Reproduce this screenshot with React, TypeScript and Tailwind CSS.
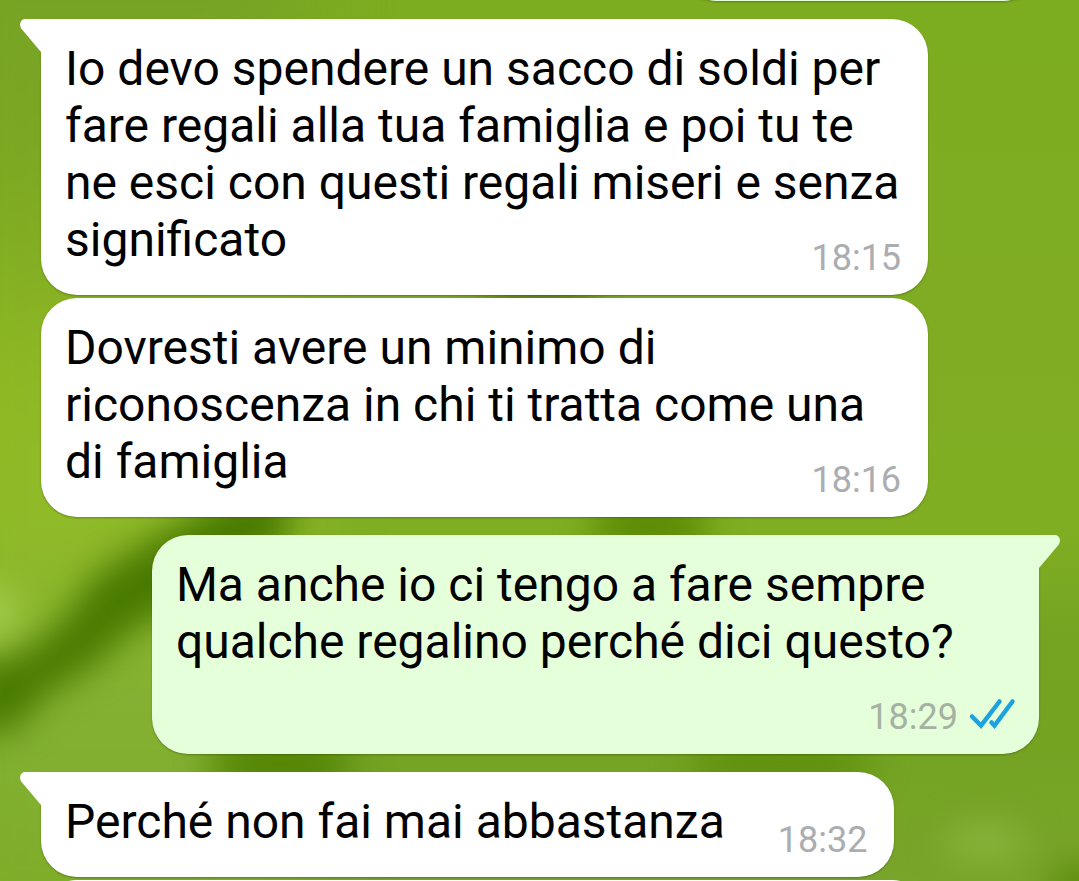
import type { ReactNode } from "react";

type Message = {
  id: number;
  text: string;
  time: string;
  outgoing?: boolean;
  first?: boolean;
};

const messages: Message[] = [
  {
    id: 1,
    text: "Io devo spendere un sacco di soldi per fare regali alla tua famiglia e poi tu te ne esci con questi regali miseri e senza significato",
    time: "18:15",
    first: true,
  },
  {
    id: 2,
    text: "Dovresti avere un minimo di riconoscenza in chi ti tratta come una di famiglia",
    time: "18:16",
  },
  {
    id: 3,
    text: "Ma anche io ci tengo a fare sempre qualche regalino perché dici questo?",
    time: "18:29",
    outgoing: true,
    first: true,
  },
  { id: 4, text: "Perché non fai mai abbastanza", time: "18:32", first: true },
];

function Wallpaper() {
  return (
    <svg
      aria-hidden="true"
      className="absolute inset-0 h-full w-full"
      viewBox="0 0 1079 881"
      preserveAspectRatio="none"
    >
      <defs>
        <linearGradient id="left" x1="0" y1="0" x2="0" y2="1">
          <stop offset="0" stopColor="#75a126" />
          <stop offset="0.25" stopColor="#7da822" />
          <stop offset="0.45" stopColor="#8fb924" />
          <stop offset="0.6" stopColor="#90ba29" />
          <stop offset="0.75" stopColor="#83b033" />
          <stop offset="1" stopColor="#7dac26" />
        </linearGradient>
        <linearGradient id="right" x1="0" y1="0" x2="0" y2="1">
          <stop offset="0" stopColor="#7cac20" />
          <stop offset="0.4" stopColor="#80ac24" />
          <stop offset="0.6" stopColor="#7fae22" />
          <stop offset="0.72" stopColor="#75a422" />
          <stop offset="0.84" stopColor="#74a322" />
          <stop offset="1" stopColor="#78a52a" />
        </linearGradient>
        <filter id="soft" x="-50%" y="-50%" width="200%" height="200%" colorInterpolationFilters="sRGB">
          <feGaussianBlur stdDeviation="17" />
        </filter>
        <filter id="wide" x="-50%" y="-50%" width="200%" height="200%" colorInterpolationFilters="sRGB">
          <feGaussianBlur stdDeviation="40" />
        </filter>
      </defs>
      <rect width="1079" height="881" fill="url(#right)" />
      <rect x="-80" y="-80" width="380" height="1040" fill="url(#left)" filter="url(#wide)" />
      <g filter="url(#soft)">
        <path d="M-30 585H10Q25 610 10 640L-30 650Z" fill="#a2cb48" />
        <path d="M235 495L150 540L95 575L60 625L20 655L-30 665V735L15 730L45 695L95 665L130 632L180 605L290 540V495Z" fill="#487900" />
        <ellipse cx="540" cy="297" rx="60" ry="22" fill="#5c7d14" />
        <ellipse cx="650" cy="527" rx="60" ry="30" fill="#5c8b04" />
        <ellipse cx="280" cy="765" rx="75" ry="28" fill="#528302" />
        <ellipse cx="780" cy="764" rx="95" ry="24" fill="#5e8f0c" />
        <ellipse cx="985" cy="842" rx="42" ry="18" fill="#8ab53e" />
        <ellipse cx="1080" cy="885" rx="32" ry="18" fill="#558606" />
      </g>
    </svg>
  );
}

function Tail({ outgoing }: { outgoing?: boolean }) {
  return (
    <svg
      aria-hidden="true"
      viewBox="0 0 22 34"
      className={
        outgoing
          ? "absolute top-0 -right-[21px] h-[34px] w-[22px] -scale-x-100 text-[#e5ffdb]"
          : "absolute top-0 -left-[21px] h-[34px] w-[22px] text-white"
      }
    >
      <path d="M22 0H5C1 0-1.500 5 1.200 9.500L21 33H22Z" fill="currentColor" />
    </svg>
  );
}

function ReadTicks() {
  return (
    <svg
      role="img"
      aria-label="Letto"
      viewBox="0 0 44 32"
      className="mb-2 h-8 w-11 overflow-visible"
      fill="none"
      stroke="#1ca3de"
      strokeWidth="4.500"
      strokeLinecap="round"
    >
      <path d="M4 18.500L13 27.500L31.500 3.500" strokeLinejoin="miter" />
      <path d="M23.500 24.500L26.500 27.500L44.500 3.500" />
    </svg>
  );
}

function Bubble({ message }: { message: Message }) {
  const { outgoing, first, text, time } = message;
  const side = outgoing ? "self-end bg-[#e5ffdb]" : "self-start bg-white";
  const corner = first ? (outgoing ? "rounded-tr-none" : "rounded-tl-none") : "";
  const gap = first ? "mt-[18px]" : "mt-[3px]";
  const meta = outgoing ? "text-[#a5b2a1]" : "text-[#abadb0]";
  return (
    <article
      className={`relative flow-root max-w-8/9 rounded-[36px] px-6 pt-[21px] pb-4 text-[48px] leading-[57px] text-black shadow-[0_1px_2px_rgba(40,60,0,0.4)] ${side} ${corner} ${gap}`}
    >
      {first && <Tail outgoing={outgoing} />}
      {text}
      <footer
        className={`float-right mt-[26px] mr-[3px] ml-[53px] flex items-end gap-[10px] text-[36px] leading-[42px] ${meta}`}
      >
        <time>{time}</time>
        {outgoing && <ReadTicks />}
      </footer>
    </article>
  );
}

function Thread({ children }: { children: ReactNode }) {
  return (
    <main className="relative flex flex-col pr-10 pl-[41px]">{children}</main>
  );
}

export default function App() {
  return (
    <div
      className="relative h-screen overflow-hidden bg-[#7cab22] font-['Roboto',sans-serif]"
      lang="it"
    >
      <Wallpaper />
      <Thread>
        <div
          aria-hidden="true"
          className="-mt-[71px] h-[72px] w-[358px] self-end rounded-[36px] bg-[#e5ffdb] shadow-[0_1px_2px_rgba(40,60,0,0.4)]"
        />
        {messages.map((message) => (
          <Bubble key={message.id} message={message} />
        ))}
        <div
          aria-hidden="true"
          className="mt-[3px] h-[72px] w-8/9 self-start rounded-[36px] bg-white"
        />
      </Thread>
    </div>
  );
}
